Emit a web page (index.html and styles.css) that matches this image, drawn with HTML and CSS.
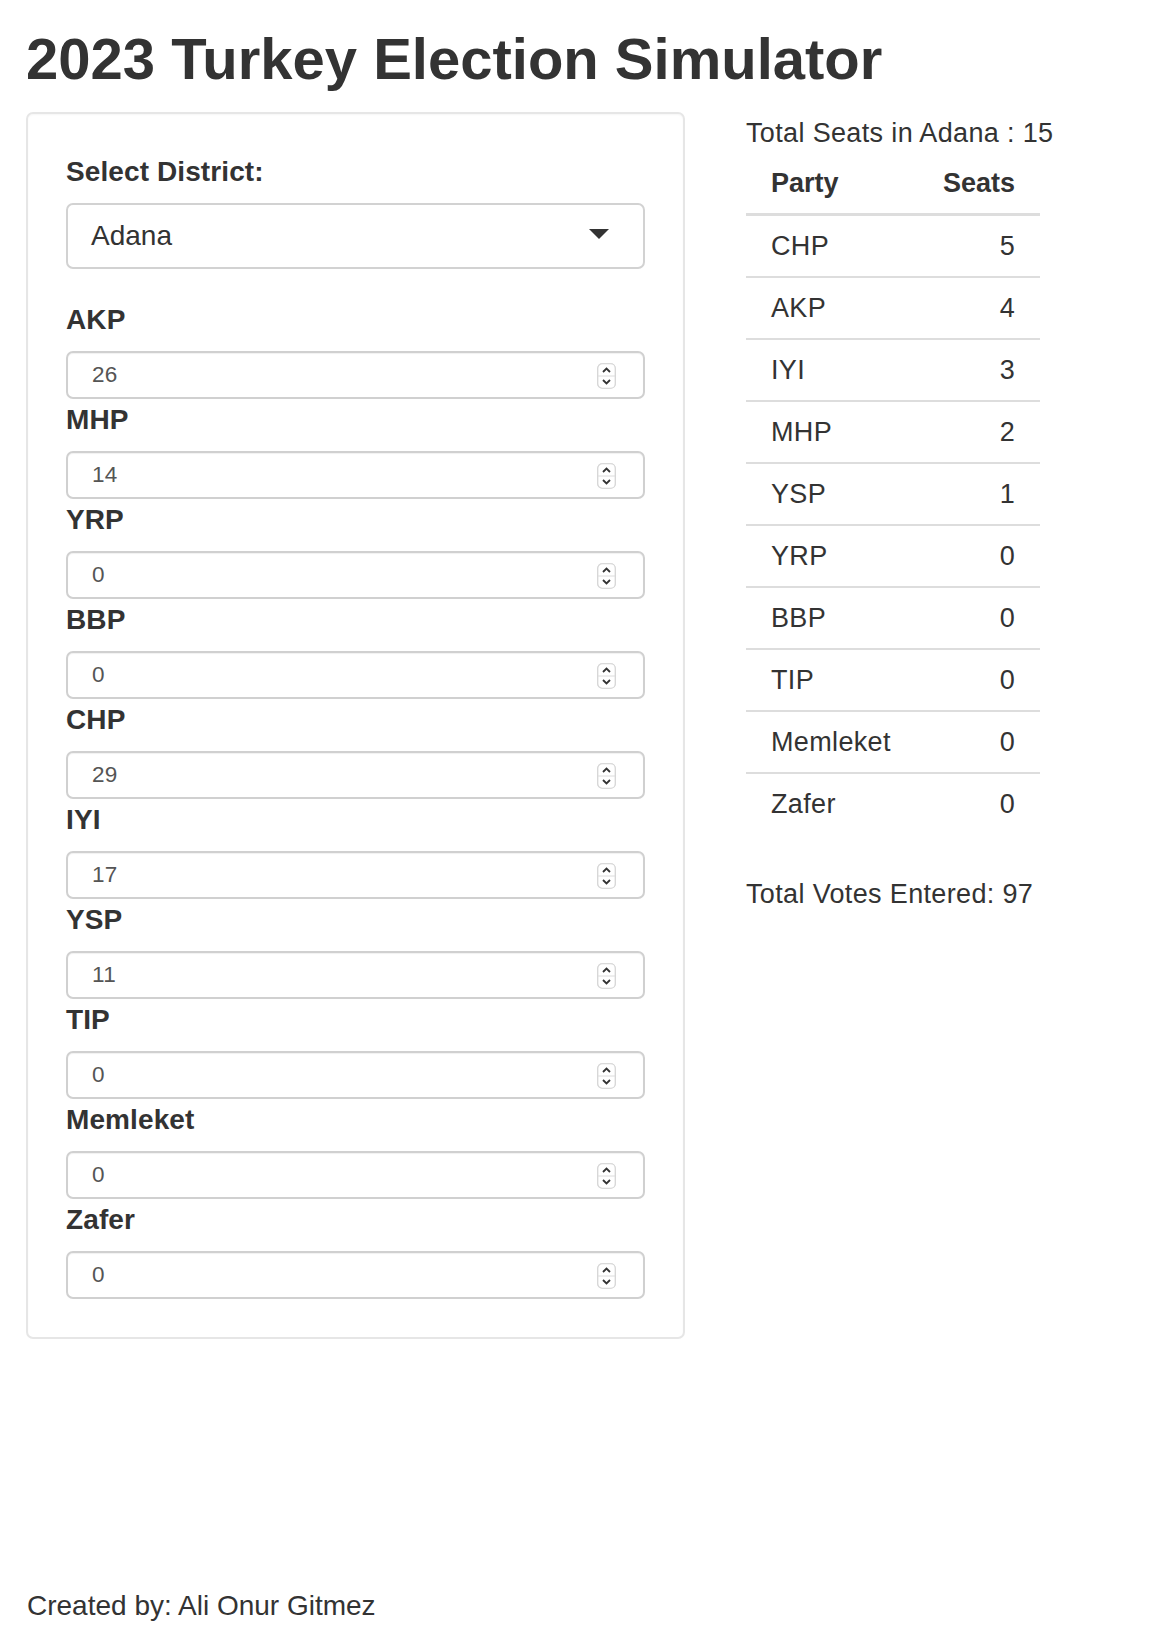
FILE: index.html
```html
<!DOCTYPE html>
<html lang="en">
<head>
<meta charset="utf-8">
<title>2023 Turkey Election Simulator</title>
<link rel="stylesheet" href="styles.css">
</head>
<body>
<div class="page">
  <h1 class="title">2023 Turkey Election Simulator</h1>
  <div class="layout">
    <div class="sidebar">
      <div class="field field-select">
        <label class="field-label">Select District:</label>
        <div class="select-box">
          <span class="select-value">Adana</span>
          <svg class="caret" width="20" height="10" viewBox="0 0 20 10"><path d="M0 0 H20 L10 10 Z" fill="#333"/></svg>
        </div>
      </div>

      <div class="field"><label class="field-label">AKP</label><div class="num-box"><span class="num-value">26</span><svg class="spin" width="19" height="26" viewBox="0 0 19 26"><rect x="0.75" y="0.75" width="17.5" height="24.5" rx="4.5" fill="#fff" stroke="#d4d4d4" stroke-width="1.2"/><line x1="1" y1="13" x2="18" y2="13" stroke="#dcdcdc" stroke-width="1"/><polyline points="6,9 9.5,5.5 13,9" fill="none" stroke="#333" stroke-width="1.8"/><polyline points="6,17 9.5,20.5 13,17" fill="none" stroke="#333" stroke-width="1.8"/></svg></div></div>
      <div class="field"><label class="field-label">MHP</label><div class="num-box"><span class="num-value">14</span><svg class="spin" width="19" height="26" viewBox="0 0 19 26"><rect x="0.75" y="0.75" width="17.5" height="24.5" rx="4.5" fill="#fff" stroke="#d4d4d4" stroke-width="1.2"/><line x1="1" y1="13" x2="18" y2="13" stroke="#dcdcdc" stroke-width="1"/><polyline points="6,9 9.5,5.5 13,9" fill="none" stroke="#333" stroke-width="1.8"/><polyline points="6,17 9.5,20.5 13,17" fill="none" stroke="#333" stroke-width="1.8"/></svg></div></div>
      <div class="field"><label class="field-label">YRP</label><div class="num-box"><span class="num-value">0</span><svg class="spin" width="19" height="26" viewBox="0 0 19 26"><rect x="0.75" y="0.75" width="17.5" height="24.5" rx="4.5" fill="#fff" stroke="#d4d4d4" stroke-width="1.2"/><line x1="1" y1="13" x2="18" y2="13" stroke="#dcdcdc" stroke-width="1"/><polyline points="6,9 9.5,5.5 13,9" fill="none" stroke="#333" stroke-width="1.8"/><polyline points="6,17 9.5,20.5 13,17" fill="none" stroke="#333" stroke-width="1.8"/></svg></div></div>
      <div class="field"><label class="field-label">BBP</label><div class="num-box"><span class="num-value">0</span><svg class="spin" width="19" height="26" viewBox="0 0 19 26"><rect x="0.75" y="0.75" width="17.5" height="24.5" rx="4.5" fill="#fff" stroke="#d4d4d4" stroke-width="1.2"/><line x1="1" y1="13" x2="18" y2="13" stroke="#dcdcdc" stroke-width="1"/><polyline points="6,9 9.5,5.5 13,9" fill="none" stroke="#333" stroke-width="1.8"/><polyline points="6,17 9.5,20.5 13,17" fill="none" stroke="#333" stroke-width="1.8"/></svg></div></div>
      <div class="field"><label class="field-label">CHP</label><div class="num-box"><span class="num-value">29</span><svg class="spin" width="19" height="26" viewBox="0 0 19 26"><rect x="0.75" y="0.75" width="17.5" height="24.5" rx="4.5" fill="#fff" stroke="#d4d4d4" stroke-width="1.2"/><line x1="1" y1="13" x2="18" y2="13" stroke="#dcdcdc" stroke-width="1"/><polyline points="6,9 9.5,5.5 13,9" fill="none" stroke="#333" stroke-width="1.8"/><polyline points="6,17 9.5,20.5 13,17" fill="none" stroke="#333" stroke-width="1.8"/></svg></div></div>
      <div class="field"><label class="field-label">IYI</label><div class="num-box"><span class="num-value">17</span><svg class="spin" width="19" height="26" viewBox="0 0 19 26"><rect x="0.75" y="0.75" width="17.5" height="24.5" rx="4.5" fill="#fff" stroke="#d4d4d4" stroke-width="1.2"/><line x1="1" y1="13" x2="18" y2="13" stroke="#dcdcdc" stroke-width="1"/><polyline points="6,9 9.5,5.5 13,9" fill="none" stroke="#333" stroke-width="1.8"/><polyline points="6,17 9.5,20.5 13,17" fill="none" stroke="#333" stroke-width="1.8"/></svg></div></div>
      <div class="field"><label class="field-label">YSP</label><div class="num-box"><span class="num-value">11</span><svg class="spin" width="19" height="26" viewBox="0 0 19 26"><rect x="0.75" y="0.75" width="17.5" height="24.5" rx="4.5" fill="#fff" stroke="#d4d4d4" stroke-width="1.2"/><line x1="1" y1="13" x2="18" y2="13" stroke="#dcdcdc" stroke-width="1"/><polyline points="6,9 9.5,5.5 13,9" fill="none" stroke="#333" stroke-width="1.8"/><polyline points="6,17 9.5,20.5 13,17" fill="none" stroke="#333" stroke-width="1.8"/></svg></div></div>
      <div class="field"><label class="field-label">TIP</label><div class="num-box"><span class="num-value">0</span><svg class="spin" width="19" height="26" viewBox="0 0 19 26"><rect x="0.75" y="0.75" width="17.5" height="24.5" rx="4.5" fill="#fff" stroke="#d4d4d4" stroke-width="1.2"/><line x1="1" y1="13" x2="18" y2="13" stroke="#dcdcdc" stroke-width="1"/><polyline points="6,9 9.5,5.5 13,9" fill="none" stroke="#333" stroke-width="1.8"/><polyline points="6,17 9.5,20.5 13,17" fill="none" stroke="#333" stroke-width="1.8"/></svg></div></div>
      <div class="field"><label class="field-label">Memleket</label><div class="num-box"><span class="num-value">0</span><svg class="spin" width="19" height="26" viewBox="0 0 19 26"><rect x="0.75" y="0.75" width="17.5" height="24.5" rx="4.5" fill="#fff" stroke="#d4d4d4" stroke-width="1.2"/><line x1="1" y1="13" x2="18" y2="13" stroke="#dcdcdc" stroke-width="1"/><polyline points="6,9 9.5,5.5 13,9" fill="none" stroke="#333" stroke-width="1.8"/><polyline points="6,17 9.5,20.5 13,17" fill="none" stroke="#333" stroke-width="1.8"/></svg></div></div>
      <div class="field"><label class="field-label">Zafer</label><div class="num-box"><span class="num-value">0</span><svg class="spin" width="19" height="26" viewBox="0 0 19 26"><rect x="0.75" y="0.75" width="17.5" height="24.5" rx="4.5" fill="#fff" stroke="#d4d4d4" stroke-width="1.2"/><line x1="1" y1="13" x2="18" y2="13" stroke="#dcdcdc" stroke-width="1"/><polyline points="6,9 9.5,5.5 13,9" fill="none" stroke="#333" stroke-width="1.8"/><polyline points="6,17 9.5,20.5 13,17" fill="none" stroke="#333" stroke-width="1.8"/></svg></div></div>
    </div>

    <div class="main">
      <div class="total-seats">Total Seats in Adana : 15</div>
      <table class="seats-table">
        <thead>
          <tr><th class="col-party">Party</th><th class="col-seats">Seats</th></tr>
        </thead>
        <tbody>
          <tr><td class="col-party">CHP</td><td class="col-seats">5</td></tr>
          <tr><td class="col-party">AKP</td><td class="col-seats">4</td></tr>
          <tr><td class="col-party">IYI</td><td class="col-seats">3</td></tr>
          <tr><td class="col-party">MHP</td><td class="col-seats">2</td></tr>
          <tr><td class="col-party">YSP</td><td class="col-seats">1</td></tr>
          <tr><td class="col-party">YRP</td><td class="col-seats">0</td></tr>
          <tr><td class="col-party">BBP</td><td class="col-seats">0</td></tr>
          <tr><td class="col-party">TIP</td><td class="col-seats">0</td></tr>
          <tr><td class="col-party">Memleket</td><td class="col-seats">0</td></tr>
          <tr><td class="col-party">Zafer</td><td class="col-seats">0</td></tr>
        </tbody>
      </table>
      <div class="total-votes">Total Votes Entered: 97</div>
    </div>
  </div>
  <div class="footer">Created by: Ali Onur Gitmez</div>
</div>
</body>
</html>
```

FILE: styles.css
```css
* { box-sizing: border-box; }

html, body {
  margin: 0;
  padding: 0;
  background: #fff;
}

body {
  font-family: "Liberation Sans", Arial, sans-serif;
  color: #333;
  font-size: 27px;
  letter-spacing: 0.35px;
  line-height: 36px;
}

.page {
  padding: 27px 0 0 26px;
}

.title {
  margin: 0 0 21px 0;
  font-size: 58px;
  line-height: 64px;
  font-weight: 700;
  color: #333;
  letter-spacing: 0;
}

.layout {
  display: flex;
  align-items: flex-start;
  gap: 61px;
}

.sidebar {
  width: 659px;
  flex: none;
  border: 2px solid #e6e6e6;
  border-radius: 7px;
  background: #fff;
  box-shadow: inset 0 1px 2px rgba(0,0,0,0.04);
  padding: 40px 38px 35px 38px;
}

.field {
  margin-bottom: 3px;
}

.field-select {
  margin-bottom: 33px;
}

.field-label {
  display: block;
  font-weight: 700;
  font-size: 28px;
  letter-spacing: 0.1px;
  line-height: 36px;
  margin-bottom: 13px;
  color: #333;
}

.select-box {
  height: 66px;
  border: 2px solid #d2d2d2;
  border-radius: 7px;
  display: flex;
  align-items: center;
  justify-content: space-between;
  padding: 0 34px 0 23px;
  background: #fff;
}

.select-value {
  font-size: 28px;
  letter-spacing: 0;
  color: #333;
}

.caret {
  display: block;
  margin-top: -4px;
}

.num-box {
  height: 48px;
  border: 2px solid #d0d0d0;
  border-radius: 7px;
  display: flex;
  align-items: center;
  justify-content: space-between;
  padding: 0 27px 0 24px;
  background: #fff;
  box-shadow: inset 0 1px 1px rgba(0,0,0,0.06);
}

.num-value {
  font-size: 22.5px;
  letter-spacing: 0.3px;
  color: #555;
}

.spin {
  display: block;
  margin-top: 2px;
  filter: drop-shadow(0 0.5px 0.5px rgba(0,0,0,0.12));
}

.main {
  padding-top: 3px;
  width: 320px;
  flex: none;
}

.total-seats {
  white-space: nowrap;
}

.seats-table {
  margin-top: 2px;
  width: 294px;
  border-collapse: separate;
  border-spacing: 0;
}

.seats-table th,
.seats-table td {
  padding: 12px 25px;
  line-height: 36px;
}

.seats-table th {
  font-weight: 700;
  letter-spacing: 0;
  border-bottom: 3px solid #dddddd;
}

.seats-table td {
  border-top: 2px solid #dddddd;
}

.seats-table tbody tr:first-child td {
  border-top: 0;
}

.col-party { text-align: left; }
.col-seats { text-align: right; }

.total-votes {
  margin-top: 42px;
  white-space: nowrap;
}

.footer {
  margin-top: 249px;
  font-size: 28px;
  letter-spacing: 0;
  line-height: 36px;
  padding-left: 1px;
}
```
